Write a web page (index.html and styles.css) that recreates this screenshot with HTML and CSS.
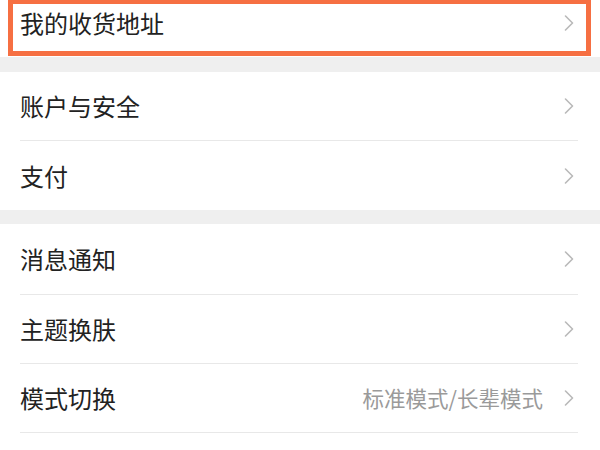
FILE: index.html
```html
<!DOCTYPE html>
<html lang="zh-CN">
<head>
<meta charset="utf-8">
<title>设置</title>
<link rel="stylesheet" href="styles.css">
</head>
<body>
<div class="page">
  <div class="row row-top">
    <div class="row-inner no-line">
      <span class="label">我的收货地址</span>
      <svg class="chev" viewBox="0 0 10 16" width="10" height="16"><polyline points="1.5,1 8.5,8 1.5,15"/></svg>
    </div>
    <div class="highlight"></div>
  </div>
  <div class="band band-1"></div>
  <div class="group group-1">
    <div class="row">
      <div class="row-inner">
        <span class="label">账户与安全</span>
        <svg class="chev" viewBox="0 0 10 16" width="10" height="16"><polyline points="1.5,1 8.5,8 1.5,15"/></svg>
      </div>
    </div>
    <div class="row">
      <div class="row-inner no-line">
        <span class="label">支付</span>
        <svg class="chev" viewBox="0 0 10 16" width="10" height="16"><polyline points="1.5,1 8.5,8 1.5,15"/></svg>
      </div>
    </div>
  </div>
  <div class="band band-2"></div>
  <div class="group group-2">
    <div class="row">
      <div class="row-inner">
        <span class="label">消息通知</span>
        <svg class="chev" viewBox="0 0 10 16" width="10" height="16"><polyline points="1.5,1 8.5,8 1.5,15"/></svg>
      </div>
    </div>
    <div class="row">
      <div class="row-inner">
        <span class="label">主题换肤</span>
        <svg class="chev" viewBox="0 0 10 16" width="10" height="16"><polyline points="1.5,1 8.5,8 1.5,15"/></svg>
      </div>
    </div>
    <div class="row">
      <div class="row-inner">
        <span class="label">模式切换</span>
        <span class="value">标准模式/长辈模式</span>
        <svg class="chev" viewBox="0 0 10 16" width="10" height="16"><polyline points="1.5,1 8.5,8 1.5,15"/></svg>
      </div>
    </div>
  </div>
</div>
</body>
</html>
```
FILE: styles.css
```css
* { box-sizing: border-box; }
html, body {
  margin: 0;
  padding: 0;
  background: #ffffff;
}
body {
  font-family: "Noto Sans CJK SC", "Noto Sans", sans-serif;
  color: #222222;
}
.page {
  width: 600px;
  height: 450px;
  overflow: hidden;
  background: #ffffff;
}
.row {
  position: relative;
  height: 69px;
  padding-left: 20px;
  background: #ffffff;
}
.row-top {
  height: 57px;
}
.group-2 .row:first-child {
  height: 71px;
}
.row-inner {
  height: 100%;
  margin-right: 22px;
  padding-right: 5px;
  display: flex;
  align-items: center;
  border-bottom: 1px solid #e8e8e8;
}
.row-top .row-inner {
  padding-bottom: 11px;
}
.row-inner.no-line {
  border-bottom: none;
}
.label {
  font-size: 24px;
  line-height: 1;
  flex: 1;
}
.value {
  font-size: 21.5px;
  line-height: 1;
  color: #9a9a9a;
  margin-right: 21px;
}
.chev {
  flex: none;
  width: 10px;
  height: 16px;
  margin-right: -1px;
}
.chev polyline {
  fill: none;
  stroke: #b9b9b9;
  stroke-width: 1.6;
  stroke-linecap: round;
  stroke-linejoin: round;
}
.band {
  background: #efefef;
}
.band-1 { height: 15px; }
.band-2 { height: 14px; }
.highlight {
  position: absolute;
  left: 8px;
  top: -1px;
  width: 583px;
  height: 57px;
  border: 5px solid #f66f42;
  pointer-events: none;
}
```
